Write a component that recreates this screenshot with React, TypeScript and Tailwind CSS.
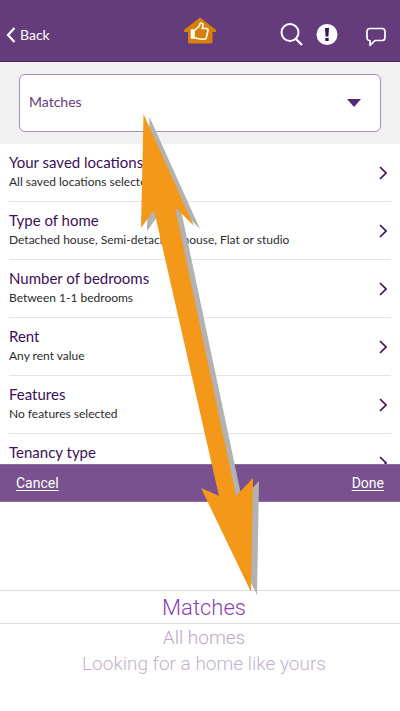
import React, { useState } from 'react';

const OPTIONS = ['Matches', 'All homes', 'Looking for a home like yours'];

const FILTERS = [
  { title: 'Your saved locations', value: 'All saved locations selected' },
  { title: 'Type of home', value: 'Detached house, Semi-detached house, Flat or studio' },
  { title: 'Number of bedrooms', value: 'Between 1-1 bedrooms' },
  { title: 'Rent', value: 'Any rent value' },
  { title: 'Features', value: 'No features selected' },
  { title: 'Tenancy type', value: '' },
];

const ARROW = '2.5,0 53,112 34,93 95,382 112,364 110,478 60,374 78,382 13,96 0,114';

function Header() {
  return (
    <header className="grid h-[62px] grid-cols-3 items-center border-b border-[#532370] bg-[#643c7b] pt-2 text-white">
      <button className="flex items-center gap-1 pl-1.5 text-sm">
        <svg width="10" height="16" viewBox="0 0 10 16" fill="none" stroke="currentColor" strokeWidth="2.2">
          <path d="M8.500 1 2 8l6.500 7" />
        </svg>
        Back
      </button>

      <svg className="mb-2 justify-self-center" width="32" height="27" viewBox="0 0 32 27" role="img" aria-label="Home matches">
        <path d="M16 0.5 32 13v2h-3.5v10q0 1.5-1.5 1.5H5.500q-1.500 0-1.500-1.500V15H0v-2z" fill="#d98009" />
        <path
          d="M7.500 13H11l4-3.500 1.300-3.300q1.900-.7 2.700 1.200.3 1.200-.9 4.100h4.400q1.800.3 1.500 1.800l-1.700 7.500q-.4 1.500-2 1.500-4.800.1-8.300-1.300H7.500z"
          fill="#d98009"
          stroke="#fff"
          strokeWidth="1.600"
          strokeLinejoin="round"
        />
        <path d="M7.500 13h3.300v8H7.500z" fill="#fff" />
      </svg>

      <div className="flex items-center justify-end pr-3.5">
        <button aria-label="Search">
          <svg width="24" height="24" viewBox="0 0 24 24" fill="none" stroke="currentColor" strokeWidth="2">
            <circle cx="10" cy="9.500" r="8.500" />
            <path d="m15.500 15.500 6.500 6.500" strokeWidth="2.300" />
          </svg>
        </button>
        <button aria-label="Alerts" className="ml-3">
          <svg width="22" height="22" viewBox="0 0 22 22">
            <circle cx="11" cy="10.500" r="10.500" fill="#fff" />
            <path d="M9 4h4l-.6 8.500H9.600z" fill="#3c1053" />
            <path d="M9.300 14h3.400v3H9.300z" fill="#3c1053" />
          </svg>
        </button>
        <button aria-label="Messages" className="mt-1 ml-7">
          <svg width="20" height="20" viewBox="0 0 20 20" fill="none" stroke="currentColor" strokeWidth="1.700" strokeLinejoin="round">
            <path d="M4 1.500h12q3 0 3 3v6q0 3-3 3H9L4 18.500v-5q-3 0-3-3v-6q0-3 3-3z" />
          </svg>
        </button>
      </div>
    </header>
  );
}

function FilterRow({ title, value }: { title: string; value: string }) {
  return (
    <li>
      <button className="flex h-[58px] w-full items-center justify-between border-b border-[#e4e4e6] pr-1 text-left">
        <span className="pb-0.5">
          <span className="block text-[15px] leading-5 text-[#3c1058]">{title}</span>
          <span className="block min-h-5 text-xs leading-5 text-[#2b2b2b]">{value}</span>
        </span>
        <svg width="8" height="14" viewBox="0 0 8 14" fill="none" stroke="#3c1058" strokeWidth="1.600">
          <path d="m1 1 6 6-6 6" />
        </svg>
      </button>
    </li>
  );
}

export default function App() {
  const [selected, setSelected] = useState(OPTIONS[0]);

  return (
    <div className="relative bg-white font-['Lato',sans-serif]">
      <Header />

      <div className="bg-[#f1f1f1] px-[19px] py-3">
        <div className="relative">
          <select
            aria-label="Show homes"
            value={selected}
            onChange={(e) => setSelected(e.target.value)}
            className="block h-[58px] w-full appearance-none rounded-md border border-[#a88bb8] bg-white px-[9px] pb-0.5 text-sm text-[#643c7b]"
          >
            {OPTIONS.map((o) => (
              <option key={o}>{o}</option>
            ))}
          </select>
          <svg className="pointer-events-none absolute top-[25px] right-5" width="14" height="8" viewBox="0 0 14 8">
            <path d="M0 0h14L7 8z" fill="#55277a" />
          </svg>
        </div>
      </div>

      <ul className="h-80 overflow-hidden px-[9px]">
        {FILTERS.map((f) => (
          <FilterRow key={f.title} {...f} />
        ))}
      </ul>

      <div className="flex h-[38px] items-center justify-between border-y border-[#8d6b9f] bg-[#79518e] px-4 font-['Roboto',sans-serif] text-sm text-white">
        <button className="underline underline-offset-2">Cancel</button>
        <button className="underline underline-offset-2">Done</button>
      </div>

      <div role="listbox" aria-label="Show homes" className="flex flex-col pt-[88px] pb-8 font-['Roboto',sans-serif]">
        {OPTIONS.map((o, i) => (
          <button
            key={o}
            role="option"
            aria-selected={o === selected}
            onClick={() => setSelected(o)}
            className={
              i === 0
                ? 'h-[34px] border-y border-[#dedede] pl-2 text-[22px] font-light text-[#8a3fb0]'
                : i === 1
                  ? 'h-7 pl-2 text-[19px] font-light text-[#bca6cc]'
                  : 'h-6 pl-2 text-[19px] leading-6 font-light text-[#c3b0d1]'
            }
          >
            {o}
          </button>
        ))}
      </div>

      {/* pointer from the drop-down to the picker */}
      <svg className="pointer-events-none absolute top-[114px] left-[141px]" width="120" height="482" viewBox="0 0 120 482" aria-hidden="true">
        <polygon points={ARROW} transform="translate(6 3)" fill="#b2b2b2" />
        <polygon points={ARROW} fill="#f49819" />
      </svg>
    </div>
  );
}
